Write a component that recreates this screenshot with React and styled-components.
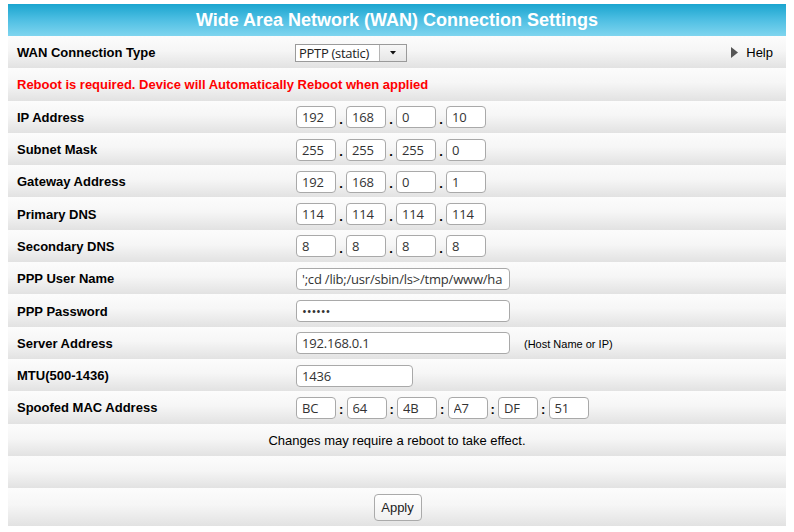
import React from "react";
import styled, { createGlobalStyle } from "styled-components";

const Global = createGlobalStyle`
  html, body { margin: 0; padding: 0; background: #ffffff; }
  body { padding: 4px 8px 0 8px; font-family: "Liberation Sans", Arial, sans-serif; }
  * { box-sizing: border-box; }
`;

const Panel = styled.div`
  width: 778px;
  display: flex;
  flex-direction: column;
`;

const Header = styled.div`
  height: 32px;
  background: linear-gradient(to bottom, #1aa5cf 0%, #4fbfe3 50%, #7fd5ef 100%);
  color: #ffffff;
  font: bold 18px "Liberation Sans", Arial, sans-serif;
  display: flex;
  align-items: center;
  justify-content: center;
  padding-top: 1px;
`;

const Row = styled.div`
  height: ${(p) => p.$h || 32.3}px;
  background: linear-gradient(to bottom, #fcfcfc 0%, #f6f6f6 45%, #e2e2e2 100%);
  display: grid;
  grid-template-columns: 279px 1fr auto;
  align-items: center;
  padding-left: 9px;
  padding-top: 1px;
`;

const CenterRow = styled(Row)`
  display: flex;
  justify-content: center;
  padding-left: 0;
`;

const Label = styled.div`
  font: bold 13px "Liberation Sans", Arial, sans-serif;
  color: #000;
`;

const Warning = styled.div`
  font: bold 13px "Liberation Sans", Arial, sans-serif;
  color: #ff0000;
  grid-column: 1 / 4;
`;

const Fields = styled.div`
  display: flex;
  align-items: center;
`;

const Box = styled.input`
  width: ${(p) => p.$w}px;
  height: 22px;
  border: 1px solid #a9a9a9;
  border-radius: 4px;
  background: #ffffff;
  padding: 0 0 0 5px;
  font: 13px "Open Sans", "DejaVu Sans", sans-serif;
  color: #333;
  outline: none;
  letter-spacing: -0.2px;
`;

const Sep = styled.span`
  width: ${(p) => p.$w || 10}px;
  text-align: center;
  font: bold 13px "Liberation Sans", Arial, sans-serif;
  color: #000;
  padding-top: 4px;
`;

const Note = styled.span`
  margin-left: 14px;
  font: 11px "Liberation Sans", Arial, sans-serif;
  color: #000;
  padding-top: 2px;
`;

const Select = styled.div`
  width: 112px;
  height: 18px;
  border: 1px solid #9a9a9a;
  background: #fff;
  display: flex;
  margin-left: -1px;
`;

const SelectText = styled.div`
  flex: 1;
  font: 13px "Open Sans", "DejaVu Sans", sans-serif;
  color: #222;
  line-height: 16px;
  padding-left: 3px;
  letter-spacing: -0.3px;
`;

const SelectBtn = styled.div`
  width: 27px;
  border-left: 1px solid #b5b5b5;
  background: linear-gradient(to bottom, #f7f7f7, #e6e6e6);
  display: flex;
  align-items: center;
  justify-content: center;
`;

const Help = styled.div`
  display: flex;
  align-items: center;
  gap: 8px;
  padding-right: 13px;
  font: 13px "Liberation Sans", Arial, sans-serif;
  color: #000;
`;

const Info = styled.div`
  font: 13px "Liberation Sans", Arial, sans-serif;
  color: #000;
`;

const Button = styled.button`
  width: 48px;
  height: 27px;
  border: 1px solid #aaaaaa;
  border-radius: 4px;
  background: linear-gradient(to bottom, #ffffff, #f0f0f0);
  font: 13px "Liberation Sans", Arial, sans-serif;
  color: #222;
  padding: 0;
  margin-left: 1px;
`;

const ip = (vals, w = 40, sep = ".") => (
  <Fields>
    {vals.map((v, i) => (
      <React.Fragment key={i}>
        {i > 0 && <Sep $w={sep === ":" ? 10.5 : 10}>{sep}</Sep>}
        <Box $w={w} defaultValue={v} />
      </React.Fragment>
    ))}
  </Fields>
);

export default function App() {
  return (
    <>
      <Global />
      <Panel>
        <Header>Wide Area Network (WAN) Connection Settings</Header>
        <Row>
          <Label>WAN Connection Type</Label>
          <Select>
            <SelectText>PPTP (static)</SelectText>
            <SelectBtn>
              <svg width="6" height="4" viewBox="0 0 6 4"><path d="M0 0H6L3 3.5Z" fill="#111" /></svg>
            </SelectBtn>
          </Select>
          <Help>
            <svg width="7" height="11" viewBox="0 0 7 11"><path d="M0 0L7 5.5L0 11Z" fill="#555" /></svg>
            Help
          </Help>
        </Row>
        <Row>
          <Warning>Reboot is required. Device will Automatically Reboot when applied</Warning>
        </Row>
        <Row>
          <Label>IP Address</Label>
          {ip(["192", "168", "0", "10"])}
        </Row>
        <Row>
          <Label>Subnet Mask</Label>
          {ip(["255", "255", "255", "0"])}
        </Row>
        <Row>
          <Label>Gateway Address</Label>
          {ip(["192", "168", "0", "1"])}
        </Row>
        <Row>
          <Label>Primary DNS</Label>
          {ip(["114", "114", "114", "114"])}
        </Row>
        <Row>
          <Label>Secondary DNS</Label>
          {ip(["8", "8", "8", "8"])}
        </Row>
        <Row>
          <Label>PPP User Name</Label>
          <Fields>
            <Box $w={214} defaultValue="';cd /lib;/usr/sbin/ls>/tmp/www/ha" />
          </Fields>
        </Row>
        <Row>
          <Label>PPP Password</Label>
          <Fields>
            <Box $w={214} type="password" defaultValue="secret" />
          </Fields>
        </Row>
        <Row>
          <Label>Server Address</Label>
          <Fields>
            <Box $w={214} defaultValue="192.168.0.1" />
            <Note>(Host Name or IP)</Note>
          </Fields>
        </Row>
        <Row>
          <Label>MTU(500-1436)</Label>
          <Fields>
            <Box $w={117} defaultValue="1436" />
          </Fields>
        </Row>
        <Row>
          <Label>Spoofed MAC Address</Label>
          {ip(["BC", "64", "4B", "A7", "DF", "51"], 40, ":")}
        </Row>
        <CenterRow>
          <Info>Changes may require a reboot to take effect.</Info>
        </CenterRow>
        <CenterRow />
        <CenterRow $h={38}>
          <Button>Apply</Button>
        </CenterRow>
      </Panel>
    </>
  );
}
